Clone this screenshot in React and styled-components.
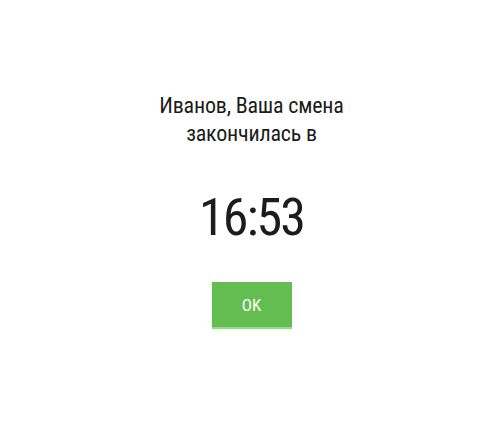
import React from 'react'
import styled, { createGlobalStyle } from 'styled-components'

const GlobalStyle = createGlobalStyle`
  html, body {
    margin: 0;
    padding: 0;
    background: #ffffff;
  }
`

const Container = styled.div`
  width: 500px;
  height: 438px;
  display: flex;
  flex-direction: column;
  align-items: center;
  padding: 92px 0 0 3px;
  box-sizing: border-box;
  font-family: "Roboto Condensed", Roboto, sans-serif;
  font-stretch: condensed;
  color: #1c1c1c;
`

const Message = styled.div`
  font-size: 22px;
  line-height: 28px;
  letter-spacing: -0.2px;
  text-align: center;
`

const Time = styled.div`
  font-size: 52px;
  line-height: 60px;
  margin-top: 40px;
  letter-spacing: -2px;
`

const OkButton = styled.button`
  margin-top: 34px;
  width: 80px;
  height: 47px;
  border: none;
  border-bottom: 2px solid #9ad88c;
  background: #63bd50;
  color: #fff;
  font-family: inherit;
  font-stretch: condensed;
  font-size: 17px;
  box-shadow: 0 1px 3px rgba(0, 0, 0, 0.08);
  cursor: pointer;
`

function App() {
  return (
    <Container>
      <GlobalStyle />
      <Message>
        Иванов, Ваша смена
        <br />
        закончилась в
      </Message>
      <Time>16:53</Time>
      <OkButton>OK</OkButton>
    </Container>
  )
}

export default App
